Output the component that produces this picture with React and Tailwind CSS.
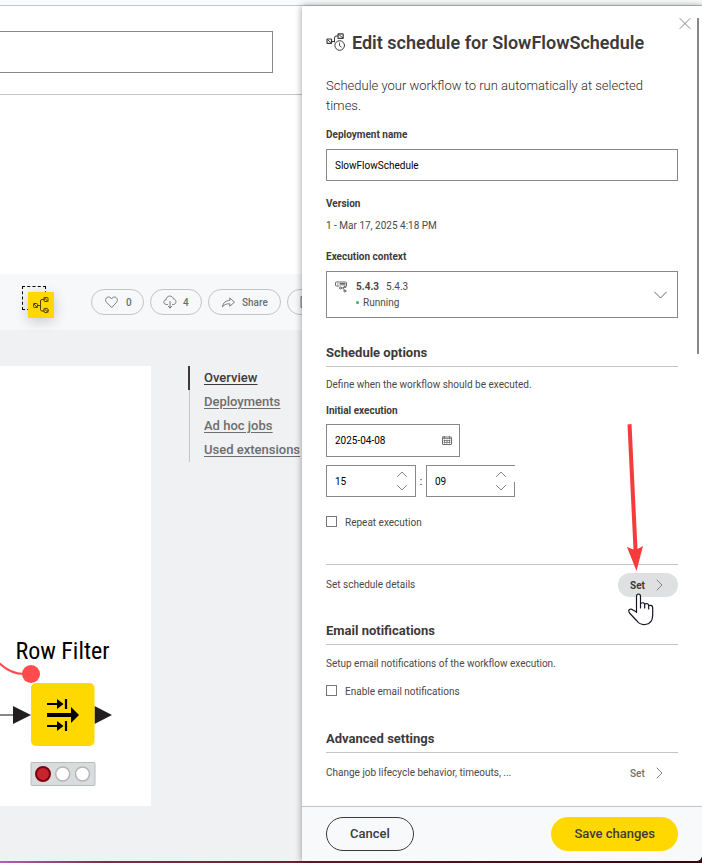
import React from "react";

const label = "block text-[10px] font-bold leading-4 text-[#3e3a39]";
const note = "text-[10px] leading-4 text-[#4c4847]";
const field =
  "w-full border border-[#888888] bg-white pl-2 text-[10px] text-black outline-none";
const pill =
  "flex h-[26px] shrink-0 items-center rounded-full border border-[#c4c4c4] text-[10px] font-medium text-[#6e6e6e]";
const line = {
  fill: "none",
  stroke: "currentColor",
  strokeLinecap: "round",
  strokeLinejoin: "round",
};

function Chevron({ d, w, h, className }) {
  return (
    <svg width={w} height={h} viewBox={`0 0 ${w} ${h}`} className={className} {...line}>
      <path d={d} strokeWidth=".9" />
    </svg>
  );
}

function WorkflowIcon() {
  return (
    <svg width="18" height="18" viewBox="0 0 18 18" className="text-[#4a3f10]" {...line}>
      <rect x="1.500" y="7.500" width="4" height="4" rx="1" />
      <path d="M1.700 7.700l3.600 3.600M5.500 9.500H8.500M8.500 9.500V5Q8.500 3.500 10 3.500H12M8.500 9.500V13.500Q8.500 15 10 15H12" />
      <rect x="12" y="1.500" width="4" height="4" rx="1" />
      <path d="M12.200 1.700l3.600 3.600" />
      <circle cx="14" cy="14.500" r="2.300" />
      <path d="M12.400 12.900l3.200 3.200" />
    </svg>
  );
}

function ScheduleIcon() {
  return (
    <svg width="20" height="20" viewBox="0 0 20 20" className="text-[#3e3a39]" {...line}>
      <rect x="1" y="6" width="4.600" height="4.400" rx=".6" strokeWidth="1.200" />
      <path d="M1.500 6.500l3.800 3.500M5.600 8.500H8.500M8.500 9V5Q8.500 3 10 3H12" />
      <rect x="12" y=".800" width="5.200" height="4.600" rx=".6" strokeWidth="1.200" />
      <path d="M12.500 1.200l4.400 3.800" />
      <circle cx="13.700" cy="12.500" r="4.800" />
      <path d="M13.500 9.800v2.900l1.800 1.200" strokeWidth=".9" />
    </svg>
  );
}

function ContextIcon() {
  return (
    <svg width="12" height="12" viewBox="0 0 12 12" className="mt-[2px] shrink-0 text-[#666]" {...line}>
      <path d="M4 5H1.500Q.500 5 .500 4V2Q.500 1 1.500 1H10.500Q11.500 1 11.500 2V4.500" />
      <path d="M2.500 3h.500M5 2.500H10M5 3.800H10" />
      <path d="M6.500 7H8L9.500 5.500M8 7L9.500 9.500" strokeWidth=".9" />
      <circle cx="10" cy="5.800" r=".9" />
      <circle cx="9.800" cy="10" r="1" />
      <circle cx="5.500" cy="7" r="1" />
    </svg>
  );
}

function CalendarIcon() {
  return (
    <svg width="10" height="9" viewBox="0 0 10 9" className="mr-[7px] shrink-0 text-[#6b6b6b]" {...line}>
      <rect x=".5" y="1" width="9" height="7.500" rx=".5" />
      <path d="M.5 2.500h9M2.500 0v2M7.500 0v2M2.500 4v3M5 4v3M7.500 4v3M2 4.500h6M2 6.500h6" strokeWidth=".8" />
    </svg>
  );
}

function TimeBox({ value, name, width, cut }) {
  return (
    <div className={`relative flex h-8 items-center border border-[#888888] ${width}`}>
      <input
        aria-label={name}
        defaultValue={value}
        className="w-full min-w-0 bg-white pl-2 text-[10px] text-black outline-none"
      />
      <div className="mr-[8px] flex shrink-0 flex-col gap-2 text-[#777]">
        <button type="button" aria-label={`Increase ${name}`} className="block">
          <Chevron w={10} h={6} d="M.5 5.500L5 1l4.500 4.500" />
        </button>
        <button type="button" aria-label={`Decrease ${name}`} className="block">
          <Chevron w={10} h={6} d="M.5 .5L5 5l4.500-4.500" />
        </button>
      </div>
      {cut && <span className="absolute -right-px top-0 h-4 w-px bg-white" />}
    </div>
  );
}

function SectionTitle({ children, className }) {
  return (
    <h2 className={`border-b border-[#c4c4c4] pb-[3px] text-[13px] font-bold leading-5 text-[#3e3a39] ${className}`}>
      {children}
    </h2>
  );
}

function Tick({ children, className }) {
  return (
    <label className={`flex items-start gap-2 ${note} ${className}`}>
      <input type="checkbox" className="mt-px size-[11px] appearance-none border border-[#777] bg-white" />
      {children}
    </label>
  );
}

function SetButton({ active }) {
  return (
    <button
      type="button"
      className={`flex h-6 w-[60px] items-center justify-between rounded-full pl-3 pr-[15px] text-[10px] ${
        active ? "bg-[#dfe0e2] font-bold text-[#3e3a39]" : "font-medium text-[#6e6e6e]"
      }`}
    >
      Set
      <Chevron w={7} h={12} d="M1 1l5 5-5 5" className="text-[#777]" />
    </button>
  );
}

function Canvas() {
  return (
    <div className="flex h-[440px] w-[151px] shrink-0 flex-col justify-end bg-white">
      <svg width="151" height="176" viewBox="0 630 151 176">
        <text x="62.500" y="659" textAnchor="middle" className="font-['Roboto_Condensed','Liberation_Sans_Narrow','Roboto',sans-serif] text-[24px]">
          Row Filter
        </text>
        <path d="M-2 662Q10 674 24 674H31" fill="none" stroke="#ff4b4b" strokeWidth="2" />
        <circle cx="31" cy="674" r="9" fill="#ff4b4b" />
        <path d="M0 715H14" stroke="#888" strokeWidth="2" />
        <path d="M13 706v18l18-9zM94.500 706v18l17.500-9z" fill="#231f20" />
        <rect x="31" y="683" width="63.500" height="63" rx="5" fill="#ffd800" />
        <g stroke="#000" fill="#000">
          <path d="M47 704H58M47 726H58" strokeWidth="2" />
          <path d="M57 699v10l6.500-5zM57 721v10l6.500-5z" stroke="none" />
          <path d="M66 699v10M66 721v10" strokeWidth="2.200" />
          <path d="M47 715H73" strokeWidth="4" />
          <path d="M71 707v16l8-8z" stroke="none" />
        </g>
        <rect x="31" y="762.500" width="64" height="23" rx="1" fill="#d9dcdd" stroke="#b9bcbd" />
        <circle cx="43" cy="774" r="7" fill="#c7242b" stroke="#7a0010" strokeWidth="2" />
        <circle cx="62.700" cy="774" r="7" fill="#fff" stroke="#b5b5b5" strokeWidth="1.500" />
        <circle cx="82.500" cy="774" r="7" fill="#fff" stroke="#b5b5b5" strokeWidth="1.500" />
      </svg>
    </div>
  );
}

function Background() {
  return (
    <main className="flex min-w-0 flex-1 flex-col overflow-hidden bg-[#eff1f3]">
      <div className="border-b border-[#c4c4c4] bg-white pb-[21px] pr-[29px] pt-[25px]">
        <input aria-label="Search" className="block h-[42px] w-full border border-l-0 border-[#888888] bg-white outline-none" />
      </div>
      <div className="h-[179px] bg-white" />
      <div className="flex h-14 items-center bg-[#f7f8fa]">
        <div className="relative ml-[22px] size-8 shrink-0">
          <span className="absolute left-0 top-0 size-6 border border-dashed border-black" />
          <span className="absolute left-[6px] top-[6px] flex size-[26px] items-center justify-center bg-[#ffd800] shadow-[0_3px_14px_rgba(0,0,0,0.2)]">
            <WorkflowIcon />
          </span>
        </div>
        <div className="ml-[37px] flex gap-[6px]">
          <button className={`${pill} w-[53px] gap-2 pl-[13px]`}>
            <svg width="13" height="12" viewBox="0 0 13 12" {...line} strokeWidth=".9">
              <path d="M6.500 11.300L1.400 6.200C-.3 4 1 1 3.500 1 5 1 6 2 6.500 3 7 2 8 1 9.500 1c2.500 0 3.800 3 2.100 5.200z" />
            </svg>
            0
          </button>
          <button className={`${pill} w-[52px] gap-[6px] pl-3`}>
            <svg width="14" height="14" viewBox="0 0 14 14" {...line} strokeWidth=".9">
              <path d="M4.500 9.500H3.500C0 9.500 0 5 3 4.800 3.500 0 9.500 0 10.300 3.800c3.500.2 3.500 5.700 0 5.700H9.500M7 6.500v6.500M5.200 11.200L7 13l1.800-1.800" />
            </svg>
            4
          </button>
          <button className={`${pill} w-[73px] gap-[7px] pl-[13px]`}>
            <svg width="13" height="11" viewBox="0 0 13 11" {...line} strokeWidth=".9">
              <path d="M.6 9.500C1 5.500 4 3.500 7.800 3.500V1l4.700 4.200-4.700 4V6.800C4.800 6.500 2.500 7.500.6 9.500z" />
            </svg>
            Share
          </button>
          <button aria-label="More" className={`${pill} w-[60px] pl-3`}>
            <svg width="12" height="12" viewBox="0 0 12 12" {...line}>
              <rect x="1.500" y=".5" width="9" height="11" />
            </svg>
          </button>
        </div>
      </div>
      <div className="flex items-start pb-[55px] pt-9">
        <Canvas />
        <nav className="ml-[37px] flex shrink-0 flex-col text-[13px] font-medium leading-6 text-[#6e6e6e] underline underline-offset-2">
          <a href="#overview" className="border-l-2 border-[#3e3a39] pl-[14px] text-[#3e3a39]">Overview</a>
          <a href="#deployments" className="ml-px border-l border-[#c4c4c4] pl-[14px]">Deployments</a>
          <a href="#jobs" className="ml-px border-l border-[#c4c4c4] pl-[14px]">Ad hoc jobs</a>
          <a href="#extensions" className="ml-px border-l border-[#c4c4c4] pl-[14px]">Used extensions</a>
        </nav>
      </div>
    </main>
  );
}

function Annotation() {
  return (
    <svg width="20" height="148" viewBox="0 0 20 148" className="pointer-events-none absolute bottom-px left-0">
      <path d="M.5 .5L4.500 0 10.500 125 16 122 9.500 147 0 123 6.500 125.500z" fill="#f53b3b" />
    </svg>
  );
}

function Pointer() {
  return (
    <svg width="27" height="33" viewBox="0 0 27 33" className="pointer-events-none absolute left-[10px] top-5">
      <path
        d="M8.500 20V3.500Q8.500 1 10.500 1T12.500 3.500V15V10.500Q16.500 8.500 16.700 12V15V11Q20.500 9.500 20.700 13V16V12.500Q24.700 11.500 24.700 15V22Q24.700 31 17 31.500 12 32 9 28L1.500 20Q0 17.500 1.500 16.500 3 15.500 5 17L8.500 19"
        fill="#fff"
        stroke="#15152a"
        strokeWidth="1.200"
        strokeLinejoin="round"
      />
    </svg>
  );
}

function Drawer() {
  return (
    <aside className="relative flex w-[400px] shrink-0 flex-col rounded-br-md bg-white shadow-[0_0_7px_rgba(0,0,0,0.4)]">
      <button aria-label="Close" className="absolute right-[11px] top-3 text-[#777]">
        <Chevron w={12} h={11} d="M1 .5l10 10M11 .5l-10 10" />
      </button>
      <span className="absolute right-[3px] top-3 h-[336px] w-[2px] bg-[#888888]" />
      <form className="flex-1 px-6 pb-5 pt-[25px]">
        <div className="flex items-center gap-[6px]">
          <ScheduleIcon />
          <h1 className="text-[18px] font-semibold leading-6 text-[#3e3a39]">Edit schedule for SlowFlowSchedule</h1>
        </div>
        <p className="mt-[21px] text-[13px] font-light leading-5 text-[#2e2a29]">
          Schedule your workflow to run automatically at selected times.
        </p>
        <label htmlFor="name" className={`${label} mt-[11px]`}>Deployment name</label>
        <input id="name" defaultValue="SlowFlowSchedule" className={`${field} mt-[6px] block h-8`} />
        <div className={`${label} mt-[15px]`}>Version</div>
        <div className={`${note} mt-[6px]`}>1 - Mar 17, 2025 4:18 PM</div>
        <div id="ctx" className={`${label} mt-[15px]`}>Execution context</div>
        <button
          type="button"
          aria-labelledby="ctx"
          className="mt-[6px] flex h-[47px] w-full items-center border border-[#888888] pl-2 pr-[10px] text-left"
        >
          <span className="flex flex-1 gap-[9px]">
            <ContextIcon />
            <span className={note}>
              <span className="flex gap-[7px]"><b>5.4.3</b>5.4.3</span>
              <span className="flex items-center gap-1">
                <span className="size-[3px] rounded-full bg-[#2fb457]" />
                Running
              </span>
            </span>
          </span>
          <Chevron w={13} h={8} d="M.5 1l6 6 6-6" className="text-[#555]" />
        </button>

        <SectionTitle className="mt-[25px]">Schedule options</SectionTitle>
        <p className={`${note} mt-[10px]`}>Define when the workflow should be executed.</p>
        <label htmlFor="date" className={`${label} mt-[10px]`}>Initial execution</label>
        <div className="mt-[5px] flex h-[33px] w-[134px] items-center border border-[#888888]">
          <input id="date" defaultValue="2025-04-08" className="w-full min-w-0 bg-white pl-2 text-[10px] text-black outline-none" />
          <CalendarIcon />
        </div>
        <div className="mt-2 flex items-center text-[10px]">
          <TimeBox name="hours" value="15" width="w-[90px]" />
          <span className="w-[10px] text-center">:</span>
          <TimeBox name="minutes" value="09" width="w-[89px]" cut />
        </div>
        <Tick className="mt-[18px]">Repeat execution</Tick>
        <div className="mt-[33px] flex items-center justify-between border-t border-[#c4c4c4] pt-2">
          <span className={note}>Set schedule details</span>
          <div className="relative">
            <SetButton active />
            <div className="absolute left-[9px] top-0"><Annotation /></div>
            <Pointer />
          </div>
        </div>

        <SectionTitle className="mt-6">Email notifications</SectionTitle>
        <p className={`${note} mt-[11px]`}>Setup email notifications of the workflow execution.</p>
        <Tick className="mt-3">Enable email notifications</Tick>

        <SectionTitle className="mt-[29px]">Advanced settings</SectionTitle>
        <div className="mt-2 flex items-center justify-between">
          <span className={note}>Change job lifecycle behavior, timeouts, ...</span>
          <SetButton />
        </div>
      </form>
      <footer className="flex items-center justify-between rounded-br-md border-t border-[#c4c4c4] bg-[#f8f9fb] px-6 py-[10px] text-[13px] font-medium text-[#3e3a39]">
        <button className="h-[34px] rounded-full border border-[#3e3a39] px-[23px]">Cancel</button>
        <button className="h-[34px] rounded-full bg-[#ffd800] px-[23px]">Save changes</button>
      </footer>
    </aside>
  );
}

export default function App() {
  return (
    <div className="flex min-h-screen flex-col bg-[#4a1015] font-['Roboto','Liberation_Sans',sans-serif]">
      <div className="h-[6px] border-b border-[#c4c4c8] bg-[#f9fafc]" />
      <div className="flex flex-1">
        <Background />
        <Drawer />
      </div>
      <div className="h-[2px] bg-linear-to-r from-[#b45fb0] via-[#7a3045] via-15% to-[#3a0a0e]" />
    </div>
  );
}
